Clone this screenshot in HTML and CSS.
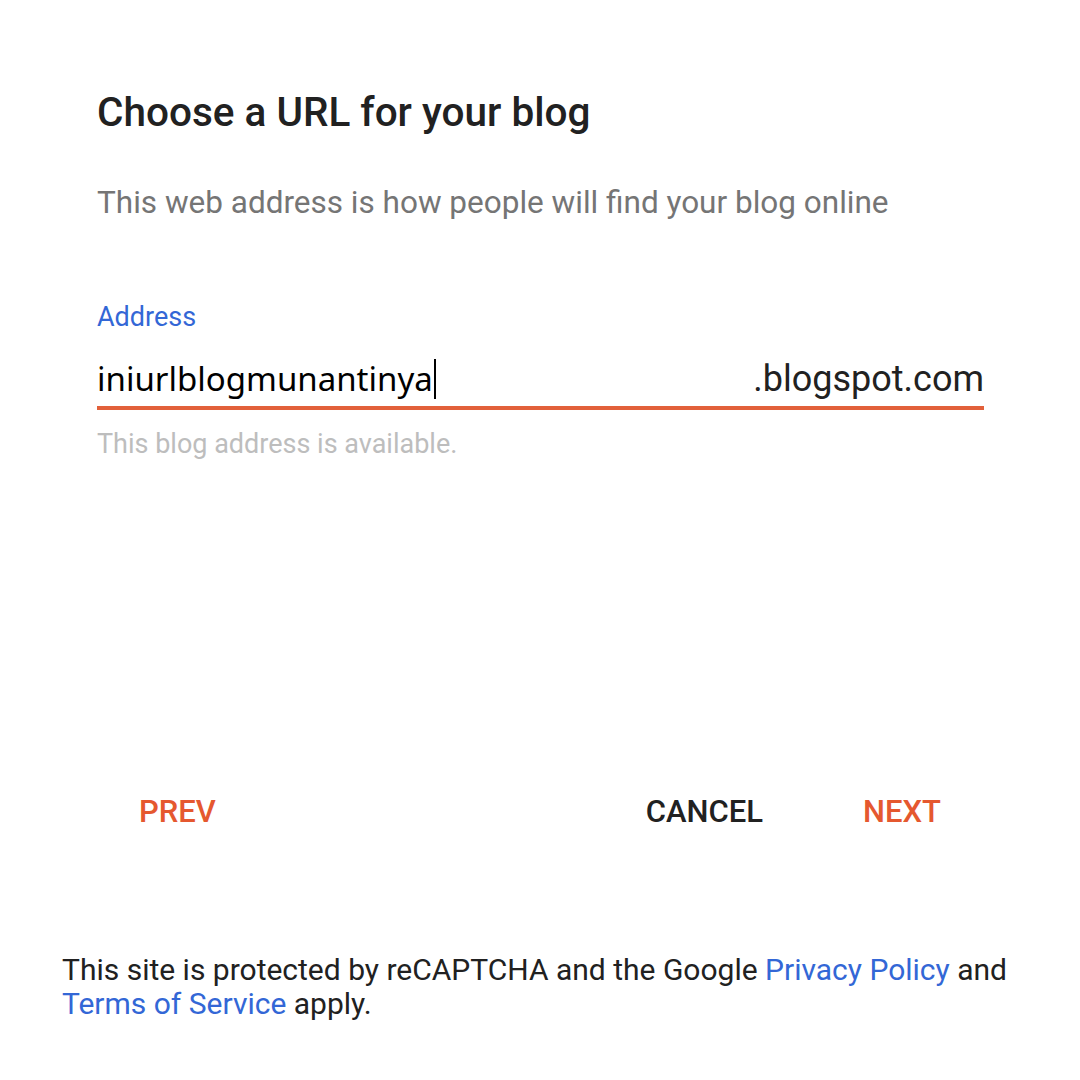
FILE: index.html
```html
<!DOCTYPE html>
<html>
<head>
<meta charset="utf-8">
<link rel="stylesheet" href="styles.css">
</head>
<body>
<div class="page">
  <div class="dialog">
    <h1 class="title">Choose a URL for your blog</h1>
    <p class="subtitle">This web address is how people will find your blog online</p>
    <div class="field">
      <div class="label">Address</div>
      <div class="input-row">
        <span class="value">iniurlblogmunantinya<span class="caret"></span></span>
        <span class="suffix">.blogspot.com</span>
      </div>
      <div class="helper">This blog address is available.</div>
    </div>
    <div class="actions">
      <span class="btn accent">PREV</span>
      <span class="spacer"></span>
      <span class="btn dark">CANCEL</span>
      <span class="btn accent">NEXT</span>
    </div>
  </div>
  <p class="footer">This site is protected by reCAPTCHA and the Google <a class="link">Privacy Policy</a> and <a class="link">Terms of Service</a> apply.</p>
</div>
</body>
</html>
```
FILE: styles.css
```css
html, body { margin: 0; padding: 0; background: #ffffff; }
body { font-family: Roboto, "Noto Sans", sans-serif; width: 1080px; height: 1080px; overflow: hidden; }
.page { display: flex; flex-direction: column; }
.dialog { padding: 88px 96px 0 97px; }
.title { margin: 0; font-size: 40.5px; font-weight: 500; color: #212121; line-height: 48px; }
.subtitle { margin: 47px 0 0; font-size: 31.5px; color: #757575; line-height: 40px; }
.field { margin-top: 78px; }
.label { font-size: 27px; color: #3367d6; line-height: 32px; }
.input-row { display: flex; justify-content: space-between; align-items: flex-end; border-bottom: 4px solid #e2603a; padding-bottom: 5px; margin-top: 24px; }
.value { font-family: "Noto Sans", Roboto, sans-serif; font-size: 33px; color: #000; line-height: 44px; display: inline-flex; align-items: center; }
.caret { display: inline-block; width: 2px; height: 40px; background: #000; margin-left: 1px; }
.suffix { font-size: 36px; color: #212121; line-height: 44px; }
.helper { margin-top: 18px; font-size: 27px; color: #bdbdbd; line-height: 32px; }
.actions { display: flex; margin-top: 332px; padding-left: 42px; padding-right: 43px; align-items: center; }
.spacer { flex: 1; }
.btn { font-size: 31px; font-weight: 500; line-height: 40px; }
.btn + .btn { margin-left: 100px; }
.accent { color: #e5582f; }
.dark { color: #212121; }
.footer { margin: 121px 0 0 62px; width: 960px; font-size: 30px; line-height: 34px; color: #212121; }
.link { color: #3367d6; text-decoration: none; }
```
